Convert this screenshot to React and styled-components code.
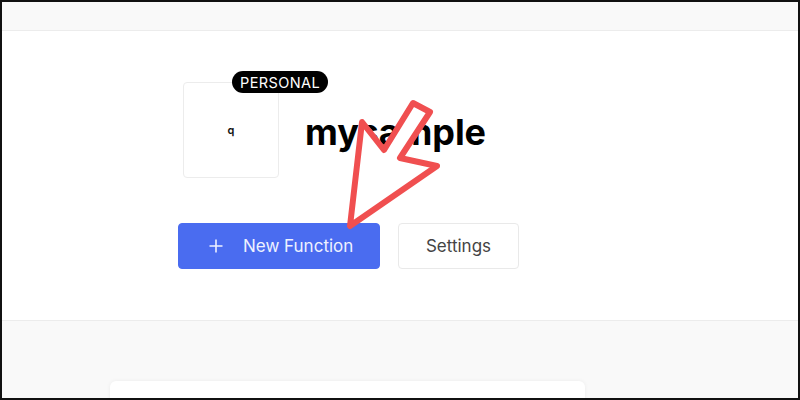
import React from "react";
import styled, { createGlobalStyle } from "styled-components";

const GlobalStyle = createGlobalStyle`
  * { box-sizing: border-box; }
  html, body { margin: 0; padding: 0; background: #fff; }
  body { font-family: Inter, "Liberation Sans", sans-serif; }
`;

// outer frame of the screenshot (dark border)
const Frame = styled.div`
  position: relative;
  width: 800px;
  height: 400px;
  border: 2px solid #111;
  overflow: hidden;
  display: flex;
  flex-direction: column;
  background: #f9f9f9;
`;

const TopBar = styled.div`
  height: 29px;
  flex-shrink: 0;
  background: #f9f9f9;
  border-bottom: 1px solid #ececec;
`;

const Hero = styled.section`
  height: 290px;
  flex-shrink: 0;
  background: #fff;
  border-bottom: 1px solid #ececec;
  padding: 51px 0 0 176px;
  display: flex;
  flex-direction: column;
  gap: 45px;
`;

const ProjectRow = styled.div`
  display: flex;
  align-items: center;
  gap: 26px;
  padding-left: 5px;
`;

const Avatar = styled.div`
  position: relative;
  width: 96px;
  height: 96px;
  border: 1px solid #ececec;
  border-radius: 4px;
  display: flex;
  align-items: center;
  justify-content: center;
  font-size: 11px;
  font-weight: 600;
  color: #111;
`;

const Badge = styled.span`
  position: absolute;
  top: -12px;
  left: 48px;
  height: 22px;
  padding: 0 8px;
  border-radius: 11px;
  background: #000;
  color: #fff;
  font-size: 14.5px;
  font-weight: 400;
  letter-spacing: 0.4px;
  display: flex;
  align-items: center;
  white-space: nowrap;
`;

const Title = styled.h1`
  margin: 4px 0 0;
  font-size: 36px;
  font-weight: 700;
  color: #000;
  letter-spacing: -0.1px;
`;

const Actions = styled.div`
  display: flex;
  gap: 18px;
`;

const Button = styled.button`
  height: 46px;
  border-radius: 4px;
  font-family: inherit;
  font-size: 17px;
  display: flex;
  align-items: center;
  cursor: pointer;
  border: 1px solid ${(p) => (p.$primary ? "#4a6cf0" : "#e9e9e9")};
  background: ${(p) => (p.$primary ? "#4a6cf0" : "#fff")};
  color: ${(p) => (p.$primary ? "#eef1ff" : "#444")};
  width: ${(p) => p.$width}px;
  padding: ${(p) => (p.$primary ? "0 0 0 30px" : "0")};
  justify-content: ${(p) => (p.$primary ? "flex-start" : "center")};
  gap: 20px;
`;

const Content = styled.main`
  flex: 1;
  padding: 60px 0 0 108px;
`;

const Card = styled.div`
  width: 475px;
  height: 60px;
  background: #fff;
  border-radius: 6px;
  box-shadow: 0 0 4px rgba(0, 0, 0, 0.06);
`;

// annotation arrow drawn over the page
const Arrow = styled.svg`
  position: absolute;
  left: 0;
  top: 0;
  pointer-events: none;
`;

function PlusIcon() {
  return (
    <svg width="14" height="14" viewBox="0 0 14 14">
      <path d="M7 0.5v13M0.5 7h13" stroke="currentColor" strokeWidth="1.6" fill="none" />
    </svg>
  );
}

export default function App() {
  return (
    <>
      <GlobalStyle />
      <Frame>
        <TopBar />
        <Hero>
          <ProjectRow>
            <Avatar>
              q
              <Badge>PERSONAL</Badge>
            </Avatar>
            <Title>mysample</Title>
          </ProjectRow>
          <Actions>
            <Button $primary $width={202}>
              <PlusIcon />
              New Function
            </Button>
            <Button $width={121}>Settings</Button>
          </Actions>
        </Hero>
        <Content>
          <Card />
        </Content>
        <Arrow width="796" height="396" viewBox="2 2 796 396">
          <polygon
            points="350,226 362,122 384,150 413,103 430,112 400,158 437,166"
            fill="#fff"
            stroke="#f04f50"
            strokeWidth="6"
            strokeLinejoin="round"
          />
        </Arrow>
      </Frame>
    </>
  );
}
